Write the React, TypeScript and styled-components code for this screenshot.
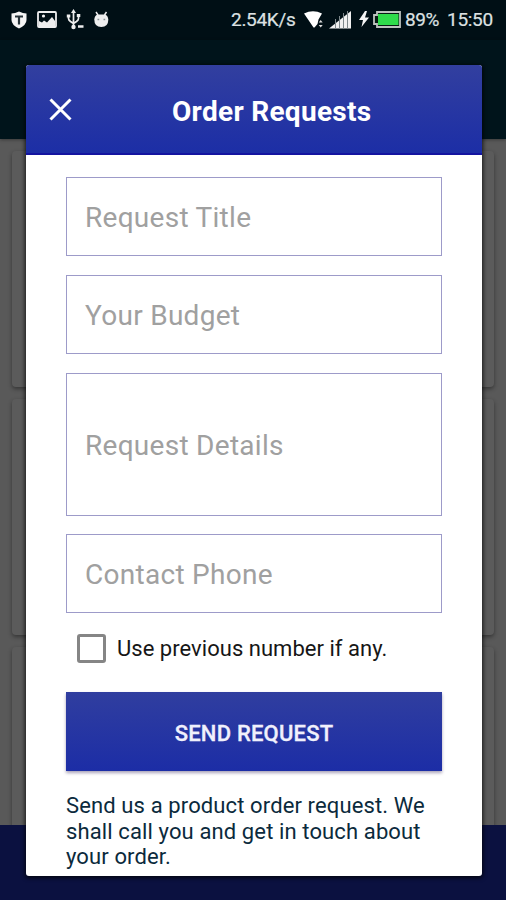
import React from "react";
import styled, { createGlobalStyle } from "styled-components";

const GlobalStyle = createGlobalStyle`
  * { box-sizing: border-box; }
  body { margin: 0; font-family: Roboto, "Liberation Sans", sans-serif; }
`;

const Screen = styled.div`
  position: relative;
  width: 506px;
  height: 900px;
  overflow: hidden;
  display: flex;
  flex-direction: column;
  background: #595959;
`;

const StatusBar = styled.header`
  height: 40px;
  flex: none;
  display: flex;
  align-items: center;
  justify-content: space-between;
  padding: 0 12px 1px 11px;
  background: #000f15;
  color: #dde1e2;
  font-size: 19px;
`;

const StatusGroup = styled.div`
  display: flex;
  align-items: center;
  svg { display: block; flex: none; }
`;

const StatusText = styled.span<{ $width: number; $gap?: number; $spacing?: number }>`
  width: ${(p) => p.$width}px;
  margin-right: ${(p) => p.$gap ?? 0}px;
  letter-spacing: ${(p) => p.$spacing ?? 0}px;
  white-space: nowrap;
  -webkit-text-stroke: 0.2px currentColor;
`;

const AppBar = styled.div`
  height: 99px;
  flex: none;
  background: #00141b;
  box-shadow: 0 1px 3px rgba(0, 0, 0, 0.35);
`;

const CardList = styled.div`
  flex: 1;
  min-height: 0;
  overflow: hidden;
  display: flex;
  flex-direction: column;
  gap: 12px;
  padding: 12px 12px 0;
`;

const Card = styled.div`
  height: 236px;
  flex: none;
  border-radius: 4px;
  background: #5b5b5b;
  box-shadow: 0 2px 4px rgba(0, 0, 0, 0.4);
`;

const BottomBar = styled.div`
  height: 75px;
  flex: none;
  background: #0b1140;
`;

const Dialog = styled.section`
  position: absolute;
  left: 26px;
  top: 65px;
  width: 456px;
  height: 811px;
  overflow: hidden;
  border-radius: 3px;
  background: #fff;
`;

const DialogShadow = styled.div`
  position: absolute;
  left: 26px;
  top: 65px;
  width: 456px;
  height: 811px;
  border-radius: 3px;
  box-shadow: 0 1px 4px 1px rgba(0, 0, 0, 0.75);
`;

const DialogHeader = styled.div`
  height: 90px;
  display: flex;
  align-items: center;
  padding: 1px 0 0 23px;
  background: linear-gradient(#323f9f, #1c2ea6);
  border-bottom: 2px solid #1414a0;
  color: #fff;
  svg { display: block; flex: none; }
`;

const Title = styled.h1`
  margin: 4px 0 0 100px;
  font-size: 28px;
  font-weight: 700;
  line-height: 36px;
  letter-spacing: 0.3px;
  white-space: nowrap;
`;

const Form = styled.div`
  display: flex;
  flex-direction: column;
  padding: 22px 40px 0;
`;

const Field = styled.div<{ $height: number; $gap: number }>`
  height: ${(p) => p.$height}px;
  margin-bottom: ${(p) => p.$gap}px;
  display: flex;
  align-items: center;
  padding: 1px 0 0 18px;
  border: 1px solid #9d9bc9;
  color: #a0a0a0;
  font-size: 28px;
  letter-spacing: 0.28px;
  white-space: nowrap;
`;

const CheckRow = styled.label`
  height: 60px;
  display: flex;
  align-items: center;
  gap: 11px;
  padding: 0 0 28px 11px;
  color: #161616;
  font-size: 22px;
  letter-spacing: 0.03px;
  white-space: nowrap;
`;

const CheckBox = styled.span`
  width: 29px;
  height: 29px;
  flex: none;
  border: 3px solid #858585;
  border-radius: 3px;
`;

const SendButton = styled.button`
  height: 79px;
  border: 0;
  padding: 3px 0 0;
  background: linear-gradient(#303e9f, #1c2da6);
  box-shadow: 0 2px 3px rgba(40, 25, 80, 0.4);
  color: #f0f0fc;
  font: 500 22px Roboto, "Liberation Sans", sans-serif;
  letter-spacing: 0.2px;
  -webkit-text-stroke: 0.3px currentColor;
`;

const Hint = styled.p`
  margin: 22px 0 0;
  color: #0b2a3c;
  font-size: 22px;
  line-height: 25.5px;
  letter-spacing: 0.12px;
  white-space: nowrap;
`;

const ShieldIcon = () => (
  <svg width="16" height="18" viewBox="0 0 16 18">
    <path d="M8 .5Q4 2.5.5 2.5V9q0 5 7.500 8.500Q15.500 14 15.500 9V2.500Q12 2.500 8 .5Z" fill="#f5f5f5" />
    <path d="M4 5.500h8M8 5.500v8" stroke="#28343a" strokeWidth="2.200" />
  </svg>
);

const PictureIcon = () => (
  <svg width="20" height="17" viewBox="0 0 20 17">
    <rect x="1" y="1" width="18" height="15" rx="1" fill="none" stroke="#eee" strokeWidth="1.800" />
    <path d="M2 10l3 1.500 2-2 3 2 5-5.500 3 4v5H2Z" fill="#eee" />
    <circle cx="6.500" cy="5" r="1.600" fill="#eee" />
  </svg>
);

const UsbIcon = () => (
  <svg width="19" height="21" viewBox="0 0 19 21" fill="none" stroke="#eee" strokeWidth="1.700">
    <path d="M7.500 3v15M2.500 7v2.500q0 1.500 2 3l3 2 3-2q2-1.500 2-3V6" />
    <path d="M7.500 0l2.500 4H5ZM.8 5.500h3.500v3H.8ZM10.800 5h3.500v3h-3.500Z" fill="#eee" stroke="none" />
    <circle cx="7.500" cy="18" r="2.200" fill="#eee" stroke="none" />
    <path d="M12 17.500h5.500" strokeWidth="2.500" />
  </svg>
);

const BugdroidIcon = () => (
  <svg width="15" height="17" viewBox="0 0 15 17">
    <path d="M2 1l2 3M12.500 1l-2 3" stroke="#eee" strokeWidth="1.500" />
    <path d="M3.500 3.500h7.500q3 1 3.300 5Q14.300 16 7.300 16T.3 8.500Q.6 4.500 3.500 3.500Z" fill="#eee" />
    <path d="M3.500 8.500h1.700M9.500 8.500h1.700" stroke="#8a9396" strokeWidth="1.500" />
  </svg>
);

const WifiIcon = () => (
  <svg width="20" height="17" viewBox="0 0 20 17">
    <path d="M0 2.500Q9 -2 18 2.500L14.500 8.500 13.500 13l-3 3.500H9.500Z" fill="#fff" />
    <path d="M16.700 9l2 2.500h-4ZM16.700 16.500l2-2.500h-4Z" fill="#ddd" />
  </svg>
);

const SignalIcon = () => (
  <svg width="22" height="18" viewBox="0 0 22 18">
    <path d="M0 17.500L22 0v17.500Z" fill="#f0f0f0" />
    <path d="M6.500 8v10M10.500 5v13M14.500 2v16M18.500 0v18" stroke="#7d878a" strokeWidth="1" />
  </svg>
);

const BoltIcon = () => (
  <svg width="10" height="17" viewBox="0 0 10 17">
    <path d="M6 0L0 9h4L2.500 16 10 6.500H6L8 0Z" fill="#f4f4f4" />
  </svg>
);

const BatteryIcon = () => (
  <svg width="28" height="17" viewBox="0 0 28 17">
    <path d="M4 1h23v15H4v-3H1V4h3Z" fill="#071b14" stroke="#bdc2be" strokeWidth="1.800" />
    <path d="M5 3h20.500v11H5Z" fill="#2fdc4b" />
  </svg>
);

const CloseIcon = () => (
  <svg width="23" height="23" viewBox="0 0 23 23">
    <path d="M1.500 1.500l20 20M21.500 1.500l-20 20" stroke="#fff" strokeWidth="3" />
  </svg>
);

const IconSlot = styled.span<{ $gap: number; $drop?: number }>`
  margin-right: ${(p) => p.$gap}px;
  padding-top: ${(p) => p.$drop ?? 0}px;
`;

const fields = [
  { label: "Request Title", height: 79, gap: 19 },
  { label: "Your Budget", height: 79, gap: 19 },
  { label: "Request Details", height: 143, gap: 18 },
  { label: "Contact Phone", height: 79, gap: 19 },
];

export default function App() {
  return (
    <>
      <GlobalStyle />
      <Screen>
        <StatusBar>
          <StatusGroup>
            <IconSlot $gap={10}><ShieldIcon /></IconSlot>
            <IconSlot $gap={9}><PictureIcon /></IconSlot>
            <IconSlot $gap={9}><UsbIcon /></IconSlot>
            <IconSlot $gap={0}><BugdroidIcon /></IconSlot>
          </StatusGroup>
          <StatusGroup>
            <StatusText $width={65} $gap={8} $spacing={-0.3}>2.54K/s</StatusText>
            <IconSlot $gap={5}><WifiIcon /></IconSlot>
            <IconSlot $gap={8} $drop={1}><SignalIcon /></IconSlot>
            <IconSlot $gap={4}><BoltIcon /></IconSlot>
            <IconSlot $gap={4}><BatteryIcon /></IconSlot>
            <StatusText $width={34} $gap={8} $spacing={-0.4}>89%</StatusText>
            <StatusText $width={47} $spacing={-0.3}>15:50</StatusText>
          </StatusGroup>
        </StatusBar>
        <AppBar />
        <CardList>
          <Card />
          <Card />
          <Card />
        </CardList>
        <BottomBar />
        <DialogShadow />
        <Dialog>
          <DialogHeader>
            <CloseIcon />
            <Title>Order Requests</Title>
          </DialogHeader>
          <Form>
            {fields.map((f) => (
              <Field key={f.label} $height={f.height} $gap={f.gap}>{f.label}</Field>
            ))}
            <CheckRow>
              <CheckBox />
              Use previous number if any.
            </CheckRow>
            <SendButton>SEND REQUEST</SendButton>
            <Hint>
              Send us a product order request. We
              <br />
              shall call you and get in touch about
              <br />
              your order.
            </Hint>
          </Form>
        </Dialog>
      </Screen>
    </>
  );
}
